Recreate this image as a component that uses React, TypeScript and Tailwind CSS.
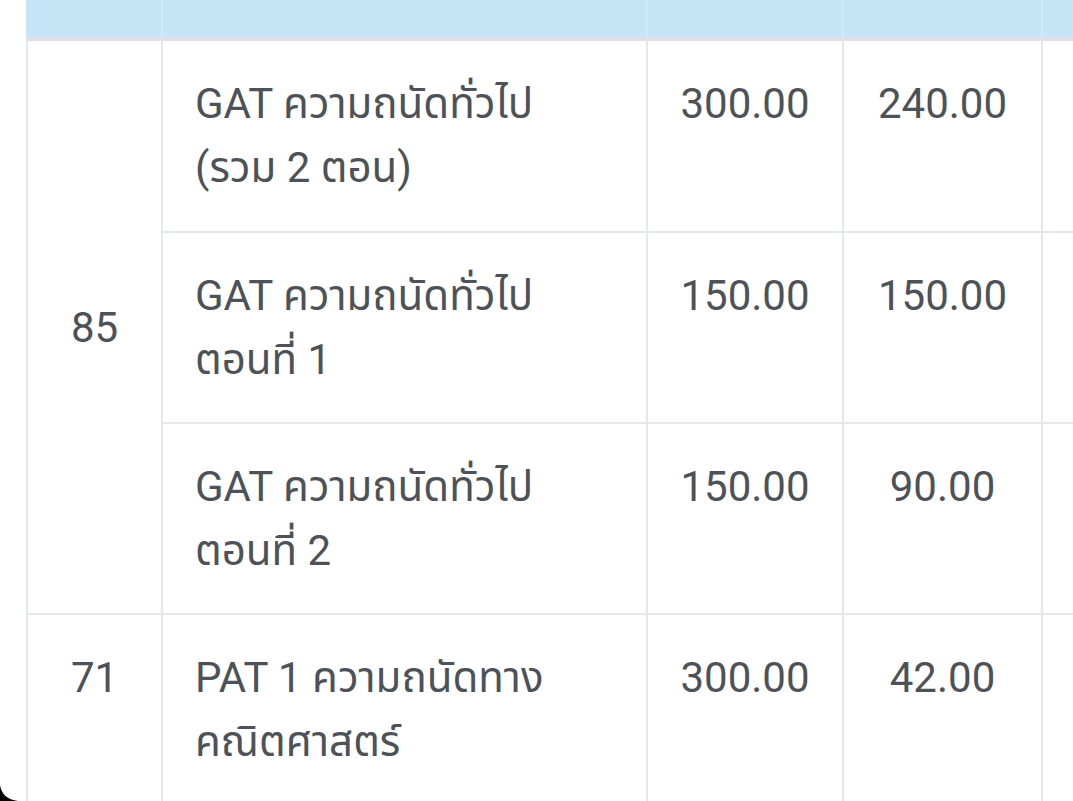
import React from "react";

const font = {
  fontFamily:
    "Roboto, 'Noto Sans Thai', 'Noto Sans Thai UI', 'Noto Sans', 'DejaVu Sans', sans-serif",
};

const cell = "border-l-2 border-t-2 border-[#e4e7eb] align-top";

export default function App() {
  return (
    <div
      className="relative w-[1073px] h-[801px] overflow-hidden bg-white text-[42px] leading-[64px] text-[#4d5258]"
      style={font}
    >
      <div className="pl-[26px]">
        <table className="border-separate border-spacing-0 table-fixed w-[1220px]">
          <colgroup>
            <col className="w-[135px]" />
            <col className="w-[485px]" />
            <col className="w-[196px]" />
            <col className="w-[199px]" />
            <col className="w-[205px]" />
          </colgroup>
          <thead>
            <tr className="h-[37px]">
              <th className="bg-[#c5e5f7] p-0"></th>
              <th className="bg-[#c5e5f7] border-l-2 border-[#d2eaf8] p-0"></th>
              <th className="bg-[#c5e5f7] border-l-2 border-[#d2eaf8] p-0"></th>
              <th className="bg-[#c5e5f7] border-l-2 border-[#d2eaf8] p-0"></th>
              <th className="bg-[#c5e5f7] border-l-2 border-[#d2eaf8] p-0"></th>
            </tr>
          </thead>
          <tbody>
            <tr className="h-[194px]">
              <td
                rowSpan={3}
                className="border-l-2 border-t-4 border-[#e4e7eb] border-t-[#d9e0e7] align-middle text-center p-0"
              >
                <span className="relative top-[1px]">85</span>
              </td>
              <td className="border-l-2 border-t-4 border-[#e4e7eb] border-t-[#d9e0e7] align-top pl-[32px] pt-[31px]">
                GAT ความถนัดทั่วไป
                <br />
                (รวม 2 ตอน)
              </td>
              <td className="border-l-2 border-t-4 border-[#e4e7eb] border-t-[#d9e0e7] align-top text-center pt-[31px]">
                300.00
              </td>
              <td className="border-l-2 border-t-4 border-[#e4e7eb] border-t-[#d9e0e7] align-top text-center pt-[31px]">
                240.00
              </td>
              <td className="border-l-2 border-t-4 border-[#e4e7eb] border-t-[#d9e0e7]"></td>
            </tr>
            <tr className="h-[191px]">
              <td className={`${cell} pl-[32px] pt-[31px]`}>
                GAT ความถนัดทั่วไป
                <br />
                ตอนที่ 1
              </td>
              <td className={`${cell} text-center pt-[31px]`}>150.00</td>
              <td className={`${cell} text-center pt-[31px]`}>150.00</td>
              <td className={cell}></td>
            </tr>
            <tr className="h-[191px]">
              <td className={`${cell} pl-[32px] pt-[31px]`}>
                GAT ความถนัดทั่วไป
                <br />
                ตอนที่ 2
              </td>
              <td className={`${cell} text-center pt-[31px]`}>150.00</td>
              <td className={`${cell} text-center pt-[31px]`}>90.00</td>
              <td className={cell}></td>
            </tr>
            <tr className="h-[191px]">
              <td className={`${cell} text-center pt-[31px]`}>71</td>
              <td className={`${cell} pl-[32px] pt-[31px]`}>
                PAT 1 ความถนัดทาง
                <br />
                คณิตศาสตร์
              </td>
              <td className={`${cell} text-center pt-[31px]`}>300.00</td>
              <td className={`${cell} text-center pt-[31px]`}>42.00</td>
              <td className={cell}></td>
            </tr>
          </tbody>
        </table>
      </div>
      <svg
        className="absolute left-0 bottom-0"
        width="24"
        height="18"
        viewBox="0 0 24 18"
      >
        <path d="M0 2 Q2 16 18 18 L0 18 Z" fill="#000" />
      </svg>
    </div>
  );
}
